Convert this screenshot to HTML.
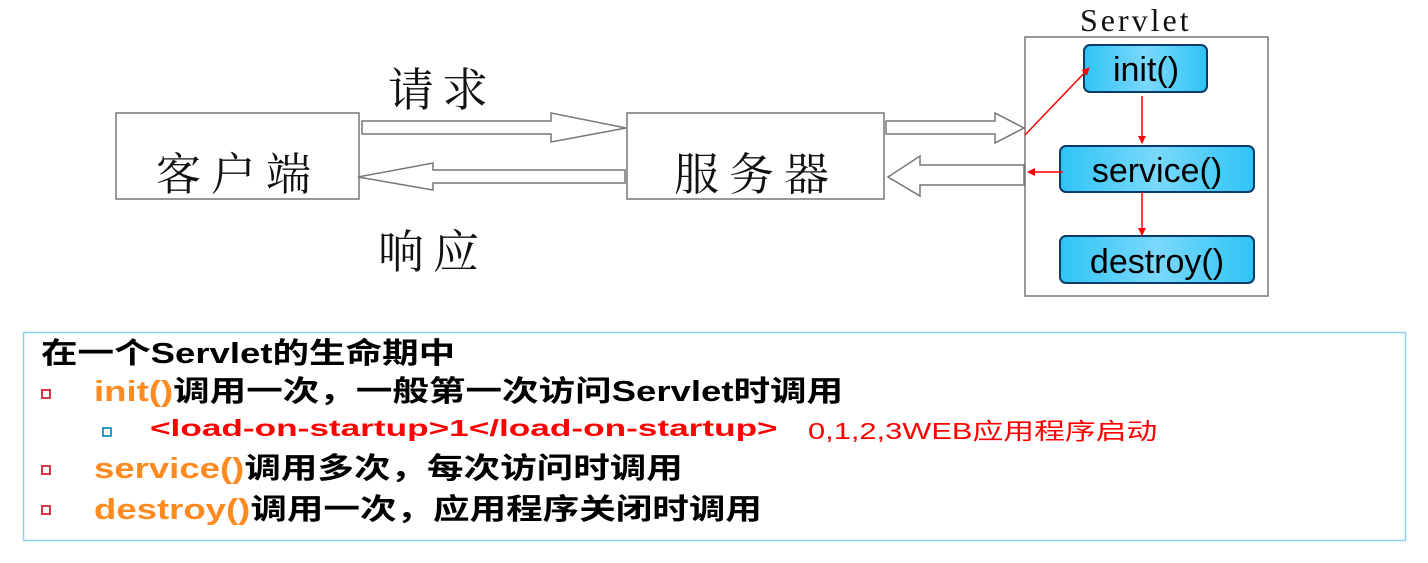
<!DOCTYPE html>
<html><head><meta charset="utf-8"><style>
html,body{margin:0;padding:0;background:#fff;width:1428px;height:563px;overflow:hidden}
svg{position:absolute;left:0;top:0}
.t{position:absolute;white-space:nowrap;font-family:"Liberation Sans","Noto Sans CJK SC",sans-serif;font-weight:bold;transform-origin:0 50%}
.w{transform:scaleX(1.26)}
.o{color:#ff8a20}
.b{position:absolute;width:6px;height:6px;border:2px solid #e0304a}
</style></head><body>
<svg width="1428" height="563" xmlns="http://www.w3.org/2000/svg">
<defs><linearGradient id="g" x1="0" y1="0" x2="1" y2="0"><stop offset="0" stop-color="#2ec4f5"/><stop offset="0.5" stop-color="#7ad8fb"/><stop offset="1" stop-color="#2ec4f5"/></linearGradient>
<marker id="a" markerWidth="8" markerHeight="8" refX="7" refY="4" orient="auto" markerUnits="userSpaceOnUse" viewBox="0 0 8 8"><path d="M0,0 L8,4 L0,8z" fill="#f00"/></marker></defs>
<g fill="#fff" stroke="#777" stroke-width="1.5">
<rect x="116" y="113" width="243" height="86"/>
<rect x="627" y="113" width="257" height="86"/>
<rect x="1025" y="37" width="243" height="259"/>
<path d="M362,121 H551 V113 L626,128 L551,142 V134 H362z"/>
<path d="M625,170 H433 V163 L358,177 L433,190 V183 H625z"/>
<path d="M886,121 H995 V113 L1024,128 L995,143 V134 H886z"/>
<path d="M1024,165 H920 V156 L888,177 L920,196 V185 H1024z"/>
</g>
<g font-family="'Liberation Serif','Noto Serif CJK SC',serif" fill="#111">
<text x="156" y="190" font-size="45" letter-spacing="10">客户端</text>
<text x="674" y="190" font-size="45" letter-spacing="10">服务器</text>
<text x="388" y="106" font-size="46" letter-spacing="8">请求</text>
<text x="378" y="268" font-size="46" letter-spacing="9">响应</text>
<text x="1080" y="31" font-size="32" letter-spacing="3">Servlet</text>
</g>
<g stroke="#0a3a6a" stroke-width="2" fill="url(#g)">
<rect x="1084" y="45" width="123" height="47" rx="6"/>
<rect x="1060" y="146" width="194" height="46" rx="6"/>
<rect x="1060" y="236" width="194" height="47" rx="6"/>
</g>
<g font-family="'Liberation Sans',sans-serif" font-size="34" fill="#000" text-anchor="middle">
<text x="1146" y="81">init()</text>
<text x="1157" y="182">service()</text>
<text x="1157" y="273">destroy()</text>
</g>
<g stroke="#f00" stroke-width="1.5" marker-end="url(#a)">
<line x1="1025" y1="135" x2="1089" y2="68"/>
<line x1="1142" y1="96" x2="1142" y2="143"/>
<line x1="1063" y1="172" x2="1028" y2="172"/>
<line x1="1142" y1="192" x2="1142" y2="235"/>
</g>
<rect x="23.5" y="332.5" width="1382" height="208" fill="none" stroke="#8fd0ee" stroke-width="1.5"/>
</svg>
<div class="t w" style="left:41px;top:330px;font-size:29px;color:#000">在一个Servlet的生命期中</div>
<div class="b" style="left:41px;top:389px"></div>
<div class="t w" style="left:94px;top:368px;font-size:29px;color:#000"><span class="o">init()</span>调用一次，一般第一次访问Servlet时调用</div>
<div class="b" style="left:102px;top:427px;border-color:#2aa0c0"></div>
<div class="t" style="left:150px;top:415px;font-size:23px;color:#f00;transform:scaleX(1.53)">&lt;load-on-startup&gt;1&lt;/load-on-startup&gt;</div>
<div class="t" style="left:808px;top:412px;font-size:23px;color:#f00;font-weight:normal;transform:scaleX(1.34)">0,1,2,3WEB应用程序启动</div>
<div class="b" style="left:41px;top:465px"></div>
<div class="t w" style="left:94px;top:445px;font-size:29px;color:#000"><span class="o">service()</span>调用多次，每次访问时调用</div>
<div class="b" style="left:41px;top:505px"></div>
<div class="t w" style="left:94px;top:486px;font-size:29px;color:#000"><span class="o">destroy()</span>调用一次，应用程序关闭时调用</div>
</body></html>
